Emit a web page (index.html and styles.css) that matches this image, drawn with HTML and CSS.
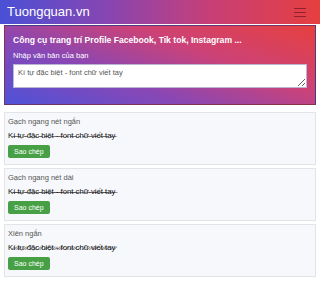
FILE: index.html
```html
<!DOCTYPE html>
<html lang="vi">
<head>
<meta charset="utf-8">
<title>Tuongquan.vn</title>
<link rel="stylesheet" href="styles.css">
</head>
<body>
<header class="topbar">
  <span class="brand">Tuongquan.vn</span>
  <span class="burger"><i></i><i></i><i></i></span>
</header>
<main class="page">
  <section class="hero">
    <h1 class="hero-title">Công cụ trang trí Profile Facebook, Tik tok, Instagram ...</h1>
    <label class="hero-label" for="src">Nhập văn bản của bạn</label>
    <textarea id="src" class="hero-input">Kí tự đặc biệt - font chữ viết tay</textarea>
  </section>
  <section class="card">
    <div class="card-title">Gạch ngang nét ngắn</div>
    <div class="card-text">K̵í̵ ̵t̵ự̵ ̵đ̵ặ̵c̵ ̵b̵i̵ệ̵t̵ ̵-̵ ̵f̵o̵n̵t̵ ̵c̵h̵ữ̵ ̵v̵i̵ế̵t̵ ̵t̵a̵y̵</div>
    <button class="copy">Sao chép</button>
  </section>
  <section class="card">
    <div class="card-title">Gạch ngang nét dài</div>
    <div class="card-text">K̶í̶ ̶t̶ự̶ ̶đ̶ặ̶c̶ ̶b̶i̶ệ̶t̶ ̶-̶ ̶f̶o̶n̶t̶ ̶c̶h̶ữ̶ ̶v̶i̶ế̶t̶ ̶t̶a̶y̶</div>
    <button class="copy">Sao chép</button>
  </section>
  <section class="card">
    <div class="card-title">Xiên ngắn</div>
    <div class="card-text">K̷í̷ ̷t̷ự̷ ̷đ̷ặ̷c̷ ̷b̷i̷ệ̷t̷ ̷-̷ ̷f̷o̷n̷t̷ ̷c̷h̷ữ̷ ̷v̷i̷ế̷t̷ ̷t̷a̷y̷</div>
    <button class="copy">Sao chép</button>
  </section>
</main>
</body>
</html>
```
FILE: styles.css
```css
* { box-sizing: border-box; }
html, body { margin: 0; padding: 0; background: #fff; }
body { font-family: "Liberation Sans", Arial, sans-serif; color: #222; }

.topbar {
  height: 24px;
  padding: 0 14px 0 7px;
  display: flex;
  align-items: center;
  justify-content: space-between;
  background: linear-gradient(90deg, #4a50d6 0%, #8a45b0 35%, #c63f78 65%, #e63f3f 100%);
}
.brand { color: #fff; font-size: 13px; line-height: 24px; }
.burger { display: flex; flex-direction: column; gap: 3px; width: 12px; }
.burger i { display: block; height: 1px; background: rgba(110, 20, 40, 0.7); }

.page { padding: 1px 4px 4px 4px; display: flex; flex-direction: column; gap: 3px; }

.hero {
  border: 1px solid rgba(60, 40, 70, 0.55);
  background: linear-gradient(20deg, #4e52d8 0%, #8a47b4 35%, #cc4277 65%, #e6403e 100%);
  padding: 8px 8px 16px 8px;
  display: flex;
  flex-direction: column;
  margin-bottom: 4px;
}
.hero-title { margin: 0; color: #fff; font-size: 8.6px; font-weight: bold; line-height: 12px; }
.hero-label { color: #fff; font-size: 7.5px; line-height: 12px; margin-top: 4px; }
.hero-input {
  margin-top: 2px;
  height: 24px;
  width: 100%;
  border: 1px solid #b9b4d8;
  padding: 3px 4px;
  font-family: "Liberation Sans", Arial, sans-serif;
  font-size: 7.5px;
  color: #555;
  resize: vertical;
  background: #fff;
}

.card {
  background: #f7f8fb;
  border: 1px solid #e2e4e8;
  padding: 3px 3px 6px 3px;
  display: flex;
  flex-direction: column;
  align-items: flex-start;
}
.card-title { font-size: 7.5px; line-height: 11px; color: #555; }
.card-text { margin-top: 2px; font-size: 7.7px; line-height: 13px; color: #111; font-family: "Liberation Sans", "DejaVu Sans", sans-serif; }
.copy {
  margin-top: 3px;
  height: 13px;
  padding: 0 6px;
  border: none;
  border-radius: 2px;
  background: #47a046;
  color: #fff;
  font-family: "Liberation Sans", Arial, sans-serif;
  font-size: 7px;
  line-height: 13px;
}
```
